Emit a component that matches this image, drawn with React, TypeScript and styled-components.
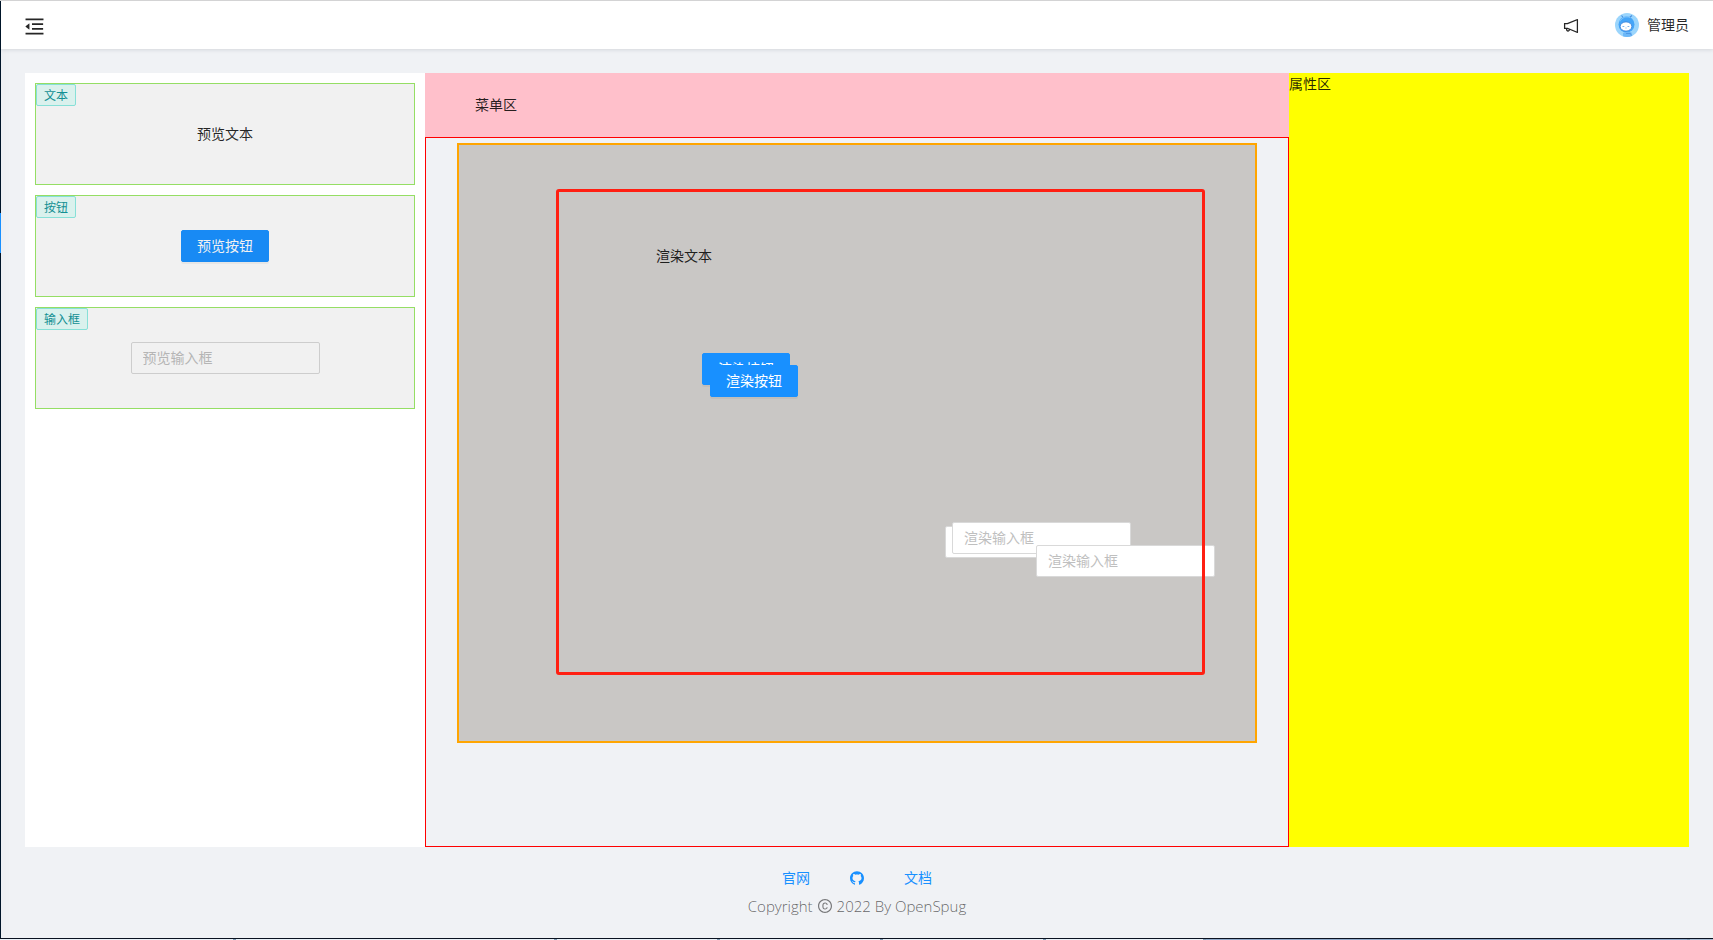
import React from 'react';
import styled, { createGlobalStyle } from 'styled-components';
import { AiOutlineNotification, AiOutlineMenuFold, AiOutlineCopyright } from 'react-icons/ai';

const GlobalStyle = createGlobalStyle`
  *, *::before, *::after { box-sizing: border-box; }
  body {
    margin: 0;
    background: #f0f2f5;
    color: rgba(0, 0, 0, 0.85);
    font-family: 'Open Sans', 'Noto Sans CJK SC', sans-serif;
    font-size: 14px;
    line-height: 22px;
  }
  button, input { font: inherit; }
  svg { display: block; }
`;

const Page = styled.div`
  display: flex;
  flex-direction: column;
  min-height: 100vh;
`;

const Frame = styled.div`
  flex: 1;
  display: flex;
  border-top: 1px solid #d9d9d9;
`;

const SiderEdge = styled.aside`
  flex: none;
  width: 1px;
  padding-top: 212px;
  background: #001529;
  box-shadow: 2px 0 8px rgba(29, 35, 41, 0.1);
  z-index: 1;
`;

const SelectedMark = styled.div`
  height: 40px;
  background: #1890ff;
`;

const Main = styled.div`
  flex: 1;
  min-width: 0;
  display: flex;
  flex-direction: column;
`;

const Header = styled.header`
  display: flex;
  align-items: center;
  justify-content: space-between;
  height: 48px;
  padding: 0 24px 0 22px;
  background: #fff;
  box-shadow: 0 1px 4px rgba(0, 21, 41, 0.12);
  z-index: 2;
`;

const IconButton = styled.button<{ $size: number }>`
  display: flex;
  padding: 2px 0 0;
  border: 0;
  background: none;
  color: rgba(0, 0, 0, 0.85);
  font-size: ${(p) => p.$size}px;
  cursor: pointer;
`;

const HeaderTools = styled.div`
  display: flex;
  align-items: center;
  gap: 35px;
`;

const Account = styled.button`
  display: flex;
  align-items: center;
  gap: 8px;
  padding: 0;
  border: 0;
  background: none;
  color: inherit;
  cursor: pointer;
`;

const Workspace = styled.main`
  flex: 1;
  display: flex;
  margin: 24px 24px 0;
`;

const Palette = styled.section`
  flex: none;
  display: flex;
  flex-direction: column;
  gap: 10px;
  width: 400px;
  padding: 10px;
  background: #fff;
`;

const Card = styled.div`
  position: relative;
  display: flex;
  align-items: center;
  justify-content: center;
  height: 102px;
  border: 1px solid #95de64;
  background: #f1f1f1;
`;

const Tag = styled.span`
  position: absolute;
  top: 0;
  left: 0;
  padding: 2px 7px 0;
  border: 1px solid #87e0d7;
  border-radius: 2px;
  background: #daf1ed;
  color: #138f93;
  font-size: 12px;
  line-height: 18px;
`;

const PrimaryButton = styled.button`
  height: 32px;
  padding: 0 15px;
  border: 1px solid #1890ff;
  border-radius: 2px;
  background: #1890ff;
  color: #fff;
  line-height: 22px;
  box-shadow: 0 2px 0 rgba(0, 0, 0, 0.045);
`;

const PreviewButton = styled(PrimaryButton)`
  border-color: #188af4;
  background: #188af4;
  color: #f1f1f1;
`;

const TextBox = styled.input`
  width: 179px;
  height: 32px;
  padding: 3px 11px 5px;
  border: 1px solid #d9d9d9;
  border-radius: 2px;
  background: #fff;
  color: inherit;
  &::placeholder { color: #bfbfbf; opacity: 1; }
`;

const PreviewTextBox = styled(TextBox)`
  width: 189px;
  border-color: #cdcdcd;
  background: transparent;
  &::placeholder { color: #b5b5b5; }
`;

const Editor = styled.section`
  flex: 1;
  min-width: 0;
  display: flex;
  flex-direction: column;
`;

const MenuBar = styled.div`
  display: flex;
  align-items: center;
  height: 64px;
  padding: 0 50px;
  background: pink;
`;

const Stage = styled.div`
  flex: 1;
  padding: 5px 31px 102px;
  border: 1px solid #f00;
`;

const Canvas = styled.div`
  position: relative;
  height: 600px;
  border: 2px solid orange;
  background: #c9c7c5;
`;

const Placed = styled.div<{ $x: number; $y: number }>`
  position: absolute;
  left: ${(p) => p.$x}px;
  top: ${(p) => p.$y}px;
  display: flex;
`;

const Outline = styled.div`
  position: absolute;
  left: 97px;
  top: 44px;
  width: 649px;
  height: 486px;
  border: 3px solid #ff1f12;
  border-radius: 3px;
  pointer-events: none;
`;

const Properties = styled.section`
  flex: none;
  width: 400px;
  background: #ff0;
`;

const Footer = styled.footer`
  display: flex;
  flex-direction: column;
  align-items: center;
  gap: 6px;
  padding: 20px 24px 21px;
  color: rgba(0, 0, 0, 0.6);
`;

const FooterLinks = styled.nav`
  display: flex;
  align-items: center;
  gap: 39px;
`;

const FooterLink = styled.a`
  color: #1890ff;
  text-decoration: none;
`;

const Copyright = styled.div`
  display: flex;
  align-items: center;
  gap: 4px;
  font-size: 15px;
  font-weight: 300;
`;

const CopyrightIcon = styled(AiOutlineCopyright)`
  color: rgba(0, 0, 0, 0.5);
  font-size: 16px;
`;

const Taskbar = styled.div`
  display: flex;
  height: 2px;
  border-top: 1px solid #0a1220;
  background: #eaf2f8;
`;

const Task = styled.div<{ $grow: number; $active?: boolean }>`
  flex: ${(p) => p.$grow} 1 0;
  border-right: 3px solid #7f9bb3;
  background: ${(p) => (p.$active ? '#8fa9c9' : 'transparent')};
`;

const TaskbarEnd = styled.div`
  width: 23px;
  background: #a9bbd2;
`;

const Avatar = () => (
  <svg width="24" height="24" viewBox="0 0 24 24" aria-hidden="true">
    <circle cx="12" cy="12" r="12" fill="#9bd5fc" />
    <path d="M8.500 5 6.500 2.500M14.500 4.500l2.500-2" stroke="#4a8fe0" strokeWidth="1.200" fill="none" />
    <circle cx="11.500" cy="11.500" r="8" fill="#45a5f8" />
    <path d="M5 8.500c2-4 6-5.500 10-4" stroke="#7cc3fb" strokeWidth="1" fill="none" />
    <ellipse cx="11" cy="13.500" rx="5.800" ry="4.600" fill="#fff" stroke="#3b82d8" strokeWidth="0.800" />
    <path d="M7.500 13.500h1.800M12.500 13.500h1.800M10.500 15h1" stroke="#7fb4ea" fill="none" />
    <path d="M8 20c3-1.500 6-1.500 8.500-.5l.8 3.200A12 12 0 0 1 8 23.300z" fill="#6db8f8" />
    <path d="M11 20.500h4.500l.8 2" stroke="#4a8fe0" strokeWidth="0.800" fill="none" />
  </svg>
);

const GithubMark = () => (
  <svg width="16" height="16" viewBox="0 0 1024 1024" fill="currentColor" aria-hidden="true">
    <path d="M511.600 76.300C264.300 76.200 64 276.400 64 523.500 64 718.900 189.300 885 363.800 946c23.500 5.900 19.900-10.800 19.900-22.200v-77.500c-135.700 15.900-141.200-73.900-150.300-88.900C215 726 171.500 718 184.500 703c30.900-15.900 62.400 4 98.900 57.900 26.400 39.100 77.900 32.500 104 26 5.700-23.500 17.900-44.500 34.700-60.800-140.600-25.200-199.200-111-199.200-213 0-49.500 16.300-95 48.300-131.700-20.400-60.500 1.900-112.300 4.900-120 58.100-5.200 118.500 41.600 123.200 45.300 33-8.900 70.700-13.600 112.900-13.600 42.400 0 80.200 4.900 113.500 13.900 11.300-8.600 67.300-48.800 121.300-43.900 2.900 7.700 24.700 58.300 5.500 118 32.400 36.800 48.900 82.700 48.900 132.300 0 102.200-59 188.100-200 212.900a127.500 127.500 0 0 1 38.100 91v112.500c.8 9 0 17.900 15 17.900 177.100-59.700 304.600-227 304.600-424.100 0-247.200-200.400-447.300-447.500-447.300z" />
  </svg>
);

const App = () => (
  <>
    <GlobalStyle />
    <Page>
      <Frame>
        <SiderEdge>
          <SelectedMark />
        </SiderEdge>
        <Main>
          <Header>
            <IconButton $size={23} aria-label="收起菜单">
              <AiOutlineMenuFold />
            </IconButton>
            <HeaderTools>
              <IconButton $size={18} aria-label="通知">
                <AiOutlineNotification />
              </IconButton>
              <Account>
                <Avatar />
                管理员
              </Account>
            </HeaderTools>
          </Header>
          <Workspace>
            <Palette>
              <Card>
                <Tag>文本</Tag>
                预览文本
              </Card>
              <Card>
                <Tag>按钮</Tag>
                <PreviewButton>预览按钮</PreviewButton>
              </Card>
              <Card>
                <Tag>输入框</Tag>
                <PreviewTextBox placeholder="预览输入框" aria-label="预览输入框" />
              </Card>
            </Palette>
            <Editor>
              <MenuBar>菜单区</MenuBar>
              <Stage>
                <Canvas>
                  <Placed $x={197} $y={100}>渲染文本</Placed>
                  <Placed $x={243} $y={208}><PrimaryButton>渲染按钮</PrimaryButton></Placed>
                  <Placed $x={251} $y={220}><PrimaryButton>渲染按钮</PrimaryButton></Placed>
                  <Placed $x={486} $y={381}><TextBox aria-label="渲染输入框 1" /></Placed>
                  <Placed $x={493} $y={377}><TextBox placeholder="渲染输入框" aria-label="渲染输入框 2" /></Placed>
                  <Placed $x={577} $y={400}><TextBox placeholder="渲染输入框" aria-label="渲染输入框 3" /></Placed>
                  <Outline />
                </Canvas>
              </Stage>
            </Editor>
            <Properties>属性区</Properties>
          </Workspace>
          <Footer>
            <FooterLinks>
              <FooterLink href="#site">官网</FooterLink>
              <FooterLink href="#github" aria-label="GitHub"><GithubMark /></FooterLink>
              <FooterLink href="#docs">文档</FooterLink>
            </FooterLinks>
            <Copyright>
              Copyright <CopyrightIcon /> 2022 By OpenSpug
            </Copyright>
          </Footer>
        </Main>
      </Frame>
      <Taskbar>
        <Task $grow={236} />
        <Task $grow={322} />
        <Task $grow={162} />
        <Task $grow={162} />
        <Task $grow={162} />
        <Task $grow={159} />
        <Task $grow={487} $active />
        <TaskbarEnd />
      </Taskbar>
    </Page>
  </>
);

export default App;
